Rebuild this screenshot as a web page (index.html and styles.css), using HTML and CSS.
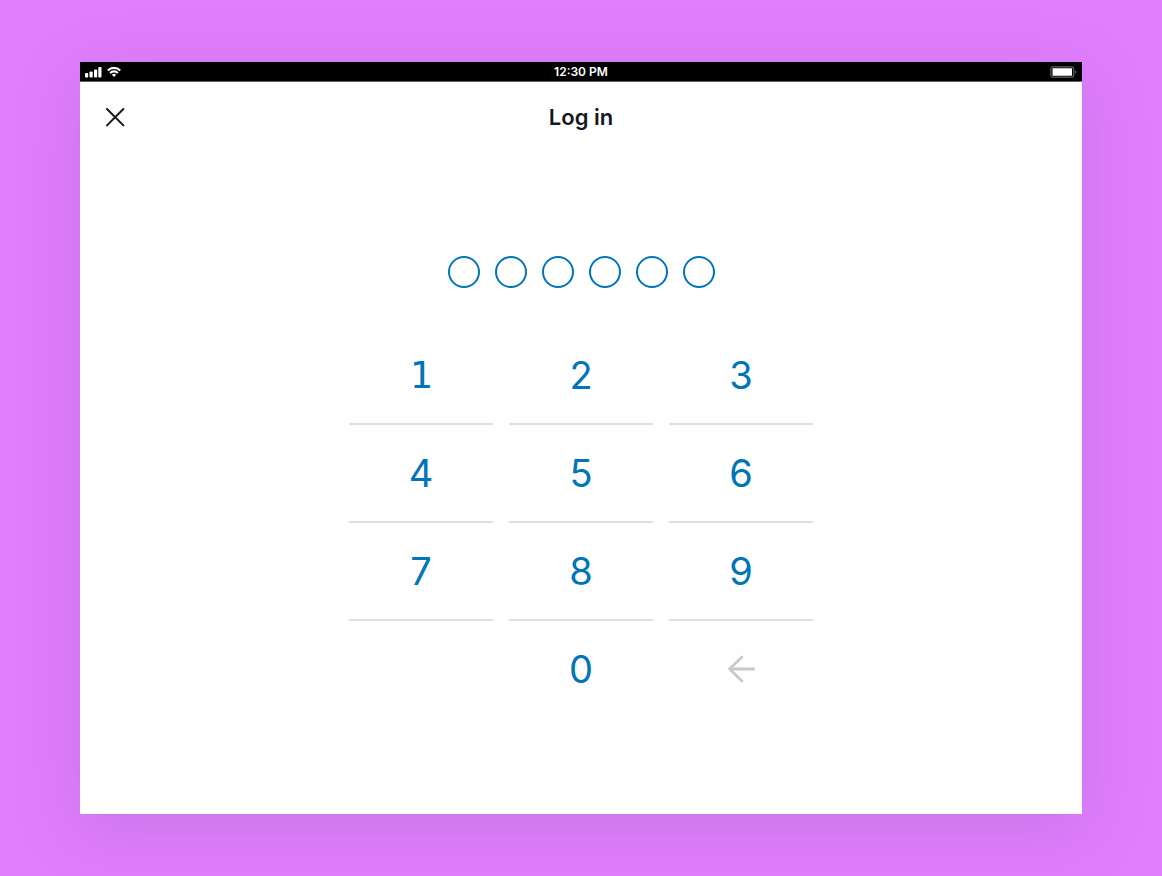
FILE: index.html
```html
<!DOCTYPE html>
<html lang="en">
<head>
<meta charset="utf-8">
<meta name="viewport" content="width=device-width, initial-scale=1">
<title>Log in</title>
<link rel="stylesheet" href="styles.css">
</head>
<body>
<main class="screen">
  <div class="status">
    <div class="status-side">
      <svg class="signal" width="18" height="12" viewBox="0 0 18 12" fill="#fff" aria-hidden="true">
        <rect x="0" y="7" width="3.2" height="4.4" rx="1"/>
        <rect x="4.5" y="5.5" width="3.2" height="5.9" rx="1"/>
        <rect x="9" y="3.5" width="3.2" height="7.9" rx="1"/>
        <rect x="13.3" y="1" width="3.2" height="10.4" rx="1"/>
      </svg>
      <svg width="14" height="12" viewBox="0 0 14 12" fill="none" stroke="#fff" stroke-width="2.1" aria-hidden="true">
        <path d="M.8 4.4a8.8 8.8 0 0 1 12.4 0"/>
        <path d="M3.1 7a5.6 5.6 0 0 1 7.8 0"/>
        <path d="M4.9 8.7a3.1 3.1 0 0 1 4.2 0L7 10.9z" fill="#fff" stroke="none"/>
      </svg>
    </div>
    <time class="clock">12:30 PM</time>
    <div class="status-side status-end">
      <svg width="27" height="12" viewBox="0 0 27 12" aria-hidden="true">
        <rect x=".8" y=".8" width="23" height="10.4" rx="2.5" fill="none" stroke="#5c5f60" stroke-width="1.2"/>
        <rect x="2.5" y="2.3" width="19.5" height="7.4" rx=".6" fill="#fff"/>
        <path d="M25 4.4c1.8.4 1.8 2.8 0 3.2z" fill="#5c5f60"/>
      </svg>
    </div>
  </div>
  <header class="header">
    <button class="close" type="button" aria-label="Close">
      <svg width="20" height="20" viewBox="0 0 20 20" fill="none" stroke="#14191e" stroke-width="2" stroke-linecap="round" aria-hidden="true"><path d="M2 2l16.4 16.4M18.4 2L2 18.4"/></svg>
    </button>
    <h1 class="title">Log in</h1>
  </header>
  <div class="dots" role="img" aria-label="0 of 6 digits entered">
    <span class="dot"></span><span class="dot"></span><span class="dot"></span><span class="dot"></span><span class="dot"></span><span class="dot"></span>
  </div>
  <div class="keypad">
    <button class="key key-one" type="button">1</button>
    <button class="key" type="button">2</button>
    <button class="key" type="button">3</button>
    <button class="key" type="button">4</button>
    <button class="key" type="button">5</button>
    <button class="key" type="button">6</button>
    <button class="key" type="button">7</button>
    <button class="key" type="button">8</button>
    <button class="key" type="button">9</button>
    <button class="key key-zero" type="button">0</button>
    <button class="key key-last" type="button" aria-label="Delete">
      <svg width="28" height="28" viewBox="0 0 28 28" fill="none" stroke="#c9c9cd" stroke-width="2.8" stroke-linecap="round" stroke-linejoin="round" aria-hidden="true"><path d="M26.6 14H2.6M15 2L2.6 14l12.4 12"/></svg>
    </button>
  </div>
</main>
</body>
</html>
```
FILE: styles.css
```css
* {
  box-sizing: border-box;
}

body {
  margin: 0;
  min-height: 100vh;
  padding: 62px 80px;
  display: flex;
  background: #e17dff;
  font-family: Inter, "Liberation Sans", sans-serif;
}

button {
  padding: 0;
  border: 0;
  background: none;
  color: inherit;
  font: inherit;
  cursor: pointer;
}

svg {
  display: block;
}

.screen {
  flex: 1;
  display: flex;
  flex-direction: column;
  background: #fefefe;
  box-shadow: 0 16px 64px rgba(90, 90, 110, 0.18);
}

.status {
  display: grid;
  grid-template-columns: 1fr auto 1fr;
  align-items: center;
  height: 20px;
  padding: 0 5px;
  background: #000;
  border-bottom: 1px solid #666;
  color: #fff;
}

.status-side {
  display: flex;
  align-items: center;
  gap: 4px;
}

.status-end {
  justify-content: flex-end;
}

.clock {
  font-size: 12px;
  font-weight: 600;
  line-height: 19px;
}

.header {
  display: grid;
  grid-template-columns: 20px 1fr 20px;
  align-items: center;
  height: 70px;
  padding: 0 25px;
}

.title {
  margin: 0;
  color: #14191e;
  font-size: 22px;
  font-weight: 600;
  line-height: 28px;
  text-align: center;
}

.dots {
  display: flex;
  justify-content: center;
  gap: 15px;
  margin-top: 104px;
}

.dot {
  width: 32px;
  height: 32px;
  border: 2px solid #0075b8;
  border-radius: 50%;
}

.keypad {
  display: grid;
  grid-template-columns: repeat(3, 144px);
  grid-auto-rows: 98px;
  column-gap: 16px;
  justify-content: center;
  margin-top: 39px;
}

.key {
  display: flex;
  align-items: center;
  justify-content: center;
  border-bottom: 2px solid #dedee5;
  color: #0075b8;
  font-size: 38px;
  line-height: 48px;
}

.key-one {
  font-family: "DejaVu Sans Mono", monospace;
}

.key-zero {
  grid-column: 2;
  border-color: transparent;
}

.key-last {
  border-color: transparent;
}
```
